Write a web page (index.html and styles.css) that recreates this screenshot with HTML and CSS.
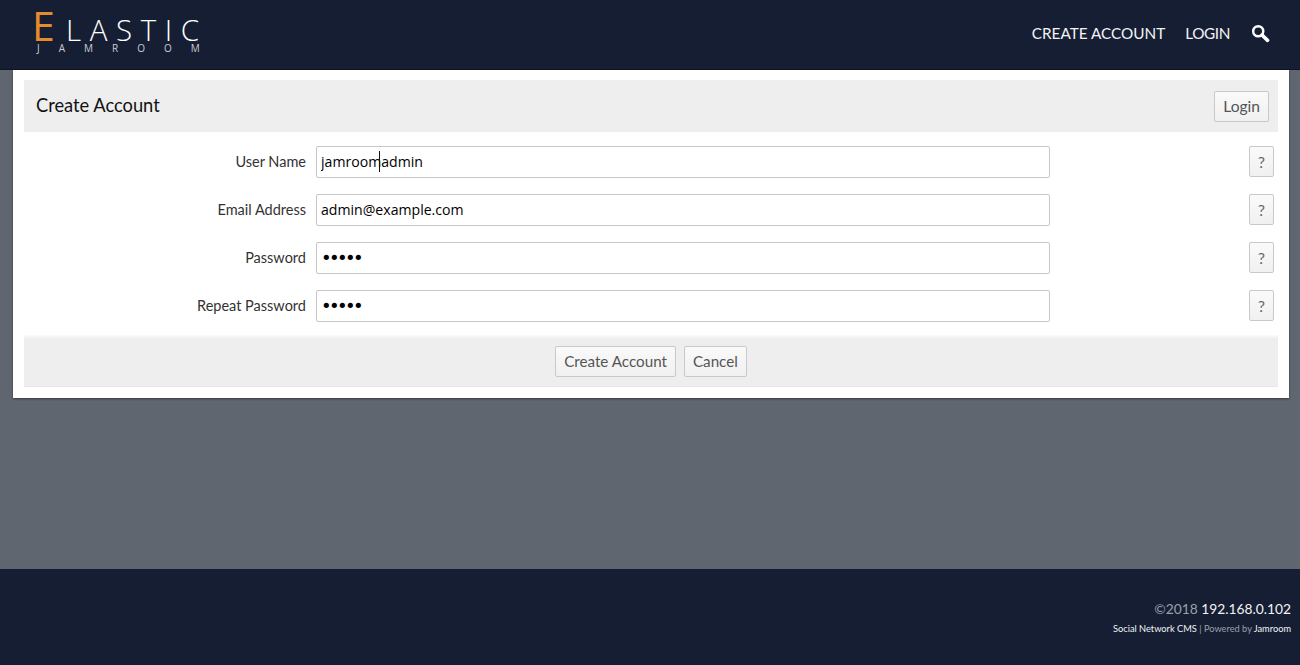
FILE: index.html
```html
<!DOCTYPE html>
<html lang="en">
<head>
<meta charset="utf-8">
<title>Create Account</title>
<link rel="stylesheet" href="styles.css">
</head>
<body>
<header class="site-header">
  <a class="logo" href="#">
    <span class="logo-main"><span class="logo-e">E</span><span class="logo-rest">LASTIC</span></span>
    <span class="logo-sub">JAMROOM</span>
  </a>
  <nav class="nav">
    <a href="#">CREATE ACCOUNT</a>
    <a class="nav-login" href="#">LOGIN</a>
    <svg class="search" viewBox="0 0 20 20" width="19" height="19" aria-hidden="true">
      <circle cx="7.6" cy="7.6" r="5.3" fill="none" stroke="#fff" stroke-width="2.6"/>
      <path d="M11.6 11.6 L17.4 17.2" stroke="#fff" stroke-width="3.8" stroke-linecap="round"/>
    </svg>
  </nav>
</header>
<main class="content">
  <section class="card">
    <div class="panel-head">
      <h1>Create Account</h1>
      <button class="btn" type="button">Login</button>
    </div>
    <form class="form">
      <div class="row">
        <label>User Name</label>
        <div class="field"><input type="text" value="jamroomadmin"><span class="caret"></span></div>
        <button class="help" type="button">?</button>
      </div>
      <div class="row">
        <label>Email Address</label>
        <div class="field"><input type="text" value="admin@example.com"></div>
        <button class="help" type="button">?</button>
      </div>
      <div class="row">
        <label>Password</label>
        <div class="field"><input class="secret" type="password" value="admin"></div>
        <button class="help" type="button">?</button>
      </div>
      <div class="row">
        <label>Repeat Password</label>
        <div class="field"><input class="secret" type="password" value="admin"></div>
        <button class="help" type="button">?</button>
      </div>
    </form>
    <div class="panel-foot">
      <button class="btn" type="button">Create Account</button>
      <button class="btn" type="button">Cancel</button>
    </div>
  </section>
</main>
<footer class="site-footer">
  <p class="copy">©2018 <a href="#">192.168.0.102</a></p>
  <p class="powered"><a href="#">Social Network CMS</a> | Powered by <a href="#">Jamroom</a></p>
</footer>
</body>
</html>
```
FILE: styles.css
```css
* { box-sizing: border-box; }
html, body { height: 100%; }
body {
  margin: 0;
  height: 665px;
  overflow: hidden;
  display: flex;
  flex-direction: column;
  background: #5f6670;
  font-family: Lato, "Open Sans", sans-serif;
  color: #222;
}
a { color: inherit; text-decoration: none; }

.site-header {
  height: 70px;
  flex: none;
  background: #161e33;
  border-bottom: 1px solid #10131c;
  display: flex;
  align-items: flex-start;
  justify-content: space-between;
  padding: 0 30px 0 32px;
}
.logo { display: flex; flex-direction: column; color: #fff; font-family: "Open Sans", sans-serif; }
.logo-main { display: flex; align-items: baseline; height: 43px; padding-top: 7px; }
.logo-e { color: #e68a2e; font-size: 41px; line-height: 36px; width: 34px; }
.logo-rest { font-size: 29.5px; line-height: 30px; letter-spacing: 8.6px; font-weight: 300; }
.logo-sub { font-size: 10px; line-height: 10px; letter-spacing: 19px; color: #c9ccd3; padding-left: 5px; white-space: nowrap; }

.nav {
  display: flex;
  align-items: center;
  gap: 20px;
  height: 66px;
  color: #f2f3f5;
  font-size: 15.3px;
}
.nav-login { letter-spacing: -.4px; }
.search { display: block; margin-left: 1px; margin-top: 1px; }

.content { flex: 1; padding: 0 11px 0 13px; }
.card {
  background: #fff;
  padding: 10px 11px 11px;
  box-shadow: 0 1px 2px rgba(0, 0, 0, .45);
}
.panel-head {
  height: 52px;
  background: #eee;
  display: flex;
  align-items: center;
  justify-content: space-between;
  padding: 0 9px 0 12px;
}
h1 { margin: -2px 0 0; font-size: 18.3px; font-weight: 400; color: #111; }

.btn {
  height: 31px;
  padding: 0 8px;
  font: 400 15.6px Lato, "Open Sans", sans-serif;
  color: #555;
  background: linear-gradient(#fafafa, #f0f0f0);
  border: 1px solid #c9c9c9;
  border-radius: 2px;
}
.panel-foot .btn { font-size: 15.2px; }

.form { padding: 14px 4px 0 0; display: flex; flex-direction: column; gap: 16px; }
.row { display: flex; align-items: flex-start; height: 32px; }
.row label {
  width: 282px;
  flex: none;
  text-align: right;
  font-size: 14.5px;
  line-height: 32px;
  color: #333;
}
.field { position: relative; width: 734px; flex: none; margin-left: 10px; }
.field input {
  display: block;
  width: 100%;
  height: 32px;
  padding: 0 4px 2px;
  font: 400 14.1px "Open Sans", sans-serif;
  color: #000;
  background: #fff;
  border: 1px solid #c6c6c6;
  border-radius: 2px;
  outline: none;
}
.field input.secret { font: 400 18px "DejaVu Sans", sans-serif; letter-spacing: -2.6px; padding-bottom: 1px; }
.caret { position: absolute; left: 63px; top: 5px; width: 1px; height: 21px; background: #111; }
.help {
  width: 25px;
  height: 31px;
  margin-left: auto;
  padding: 0;
  font: 400 15.6px Lato, "Open Sans", sans-serif;
  color: #666;
  background: linear-gradient(#fafafa, #f0f0f0);
  border: 1px solid #c9c9c9;
  border-radius: 2px;
}

.panel-foot {
  margin-top: 13px;
  height: 52px;
  padding-top: 1px;
  background: linear-gradient(#fbfbfb, #eee 4px);
  border-bottom: 1px solid #e8e8ea;
  display: flex;
  align-items: center;
  justify-content: center;
  gap: 8px;
}

.site-footer {
  height: 96px;
  flex: none;
  background: #161e33;
  text-align: right;
  padding: 30px 9px 0 0;
  color: #9aa0ac;
}
.site-footer p { margin: 0; }
.site-footer a { color: #f2f3f5; }
.copy { font-size: 13.8px; line-height: 20px; }
.site-footer .powered { font-size: 9.25px; line-height: 14px; margin-top: 3px; }
```
